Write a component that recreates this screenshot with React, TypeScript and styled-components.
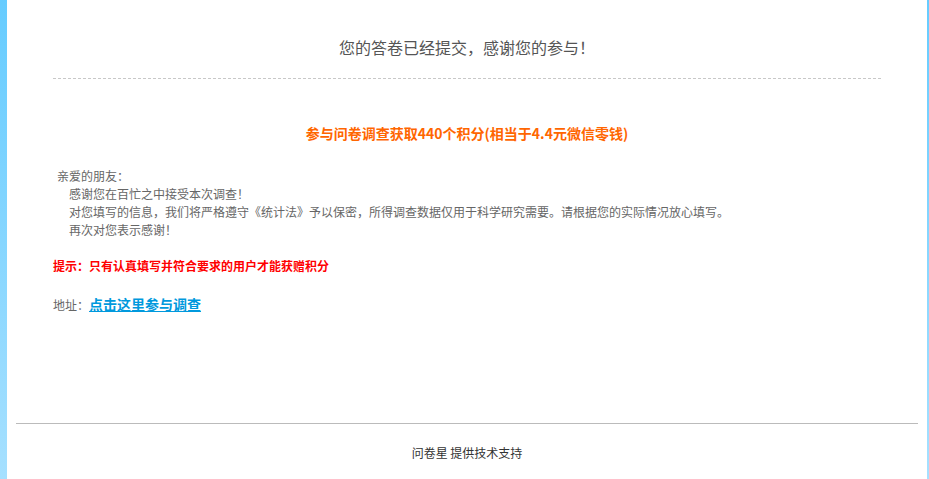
import React from 'react';
import styled, { createGlobalStyle } from 'styled-components';

const GlobalStyle = createGlobalStyle`
  html, body {
    margin: 0;
    padding: 0;
  }
  body {
    min-height: 479px;
    background: linear-gradient(to bottom, #66ccff 0%, #a6e0ff 100%);
    font-family: "Microsoft YaHei", "Noto Sans CJK SC", "Liberation Sans", sans-serif;
    font-size: 12px;
    color: #666;
  }
`;

const Wrap = styled.div`
  margin: 0 2px 0 7px;
  min-height: 479px;
  background-color: #fff;
  display: flex;
  flex-direction: column;
`;

const Contents = styled.div`
  padding: 0 46px;
  flex: 1;
`;

const Header = styled.div`
  padding: 36px 0 20px 0;
  border-bottom: 1px dashed #c8c8c8;
  text-align: center;

  h1 {
    margin: 0;
    font-size: 16px;
    line-height: 22px;
    font-weight: normal;
    color: #555;
  }
`;

const Reward = styled.div`
  margin-top: 44px;
  text-align: center;
  font-size: 14px;
  line-height: 20px;
  font-weight: bold;
  color: #ff6600;
`;

const Letter = styled.div`
  margin-top: 24px;
  padding-left: 4px;
  line-height: 18px;
  color: #666;
`;

const Line = styled.p<{ $indent?: boolean }>`
  margin: 0;
  padding-left: ${(p) => (p.$indent ? '12px' : '0')};
`;

const Tip = styled.div`
  margin-top: 18px;
  line-height: 18px;
  font-weight: bold;
  color: #ff0000;
`;

const Address = styled.div`
  margin-top: 19px;
  line-height: 20px;
  color: #666;

  a {
    font-size: 14px;
    font-weight: bold;
    color: #0099dd;
    text-decoration: underline;
  }
`;

const Footer = styled.div`
  margin: 0 9px;
  border-top: 1px solid #bbb;
  height: 57px;
  padding-top: 20px;
  box-sizing: border-box;
  text-align: center;
  line-height: 18px;
  color: #333;
`;

const Spacer = styled.div`
  height: 108px;
`;

const App = () => {
  return (
    <>
      <GlobalStyle />
      <Wrap>
        <Contents>
          <Header>
            <h1>您的答卷已经提交，感谢您的参与！</h1>
          </Header>
          <Reward>参与问卷调查获取440个积分(相当于4.4元微信零钱)</Reward>
          <Letter>
            <Line>亲爱的朋友：</Line>
            <Line $indent>感谢您在百忙之中接受本次调查！</Line>
            <Line $indent>
              对您填写的信息，我们将严格遵守《统计法》予以保密，所得调查数据仅用于科学研究需要。请根据您的实际情况放心填写。
            </Line>
            <Line $indent>再次对您表示感谢！</Line>
          </Letter>
          <Tip>提示：只有认真填写并符合要求的用户才能获赠积分</Tip>
          <Address>
            地址：<a href="#">点击这里参与调查</a>
          </Address>
          <Spacer />
        </Contents>
        <Footer>问卷星 提供技术支持</Footer>
      </Wrap>
    </>
  );
};

export default App;
